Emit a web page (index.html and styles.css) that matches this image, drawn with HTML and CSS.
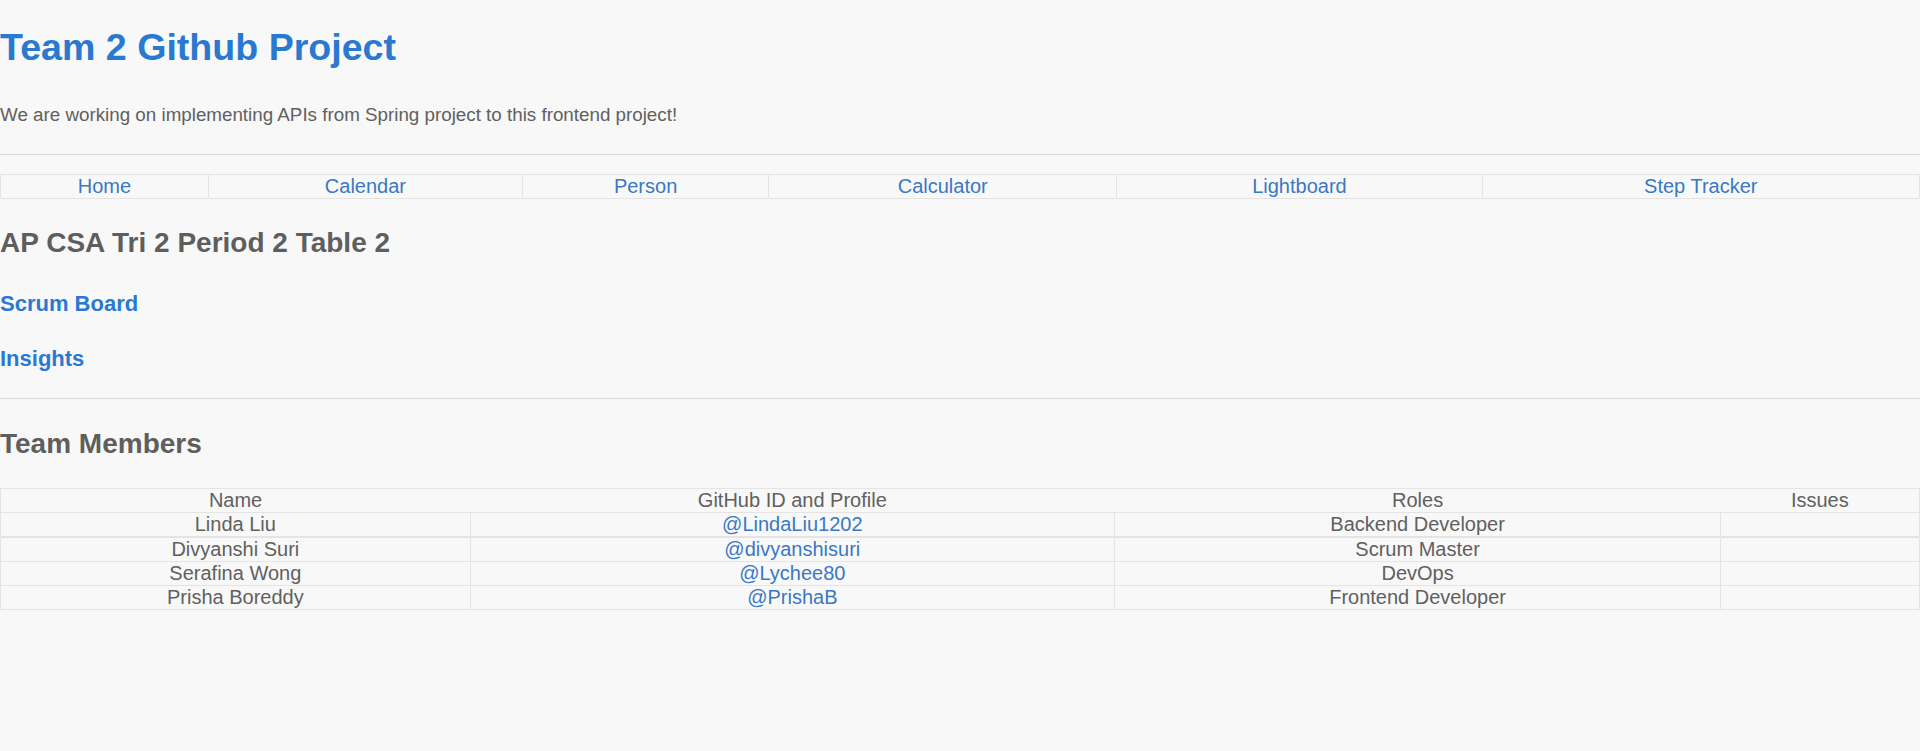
FILE: index.html
```html
<!DOCTYPE html>
<html lang="en">
<head>
<meta charset="utf-8">
<title>Team 2 Github Project</title>
<link rel="stylesheet" href="styles.css">
</head>
<body>
<h1 class="title">Team 2 Github Project</h1>
<p class="intro">We are working on implementing APIs from Spring project to this frontend project!</p>
<hr class="rule rule-top">
<table class="nav">
  <tr>
    <td><a href="#">Home</a></td>
    <td><a href="#">Calendar</a></td>
    <td><a href="#">Person</a></td>
    <td><a href="#">Calculator</a></td>
    <td><a href="#">Lightboard</a></td>
    <td><a href="#">Step Tracker</a></td>
  </tr>
</table>
<h2 class="section">AP CSA Tri 2 Period 2 Table 2</h2>
<h3 class="sub sub-first"><a href="#">Scrum Board</a></h3>
<h3 class="sub sub-second"><a href="#">Insights</a></h3>
<hr class="rule rule-mid">
<h2 class="section section-team">Team Members</h2>
<table class="team">
  <thead>
    <tr><th>Name</th><th>GitHub ID and Profile</th><th>Roles</th><th>Issues</th></tr>
  </thead>
  <tbody>
    <tr><td>Linda Liu</td><td><a href="#">@LindaLiu1202</a></td><td>Backend Developer</td><td></td></tr>
    <tr class="row-sep"><td>Divyanshi Suri</td><td><a href="#">@divyanshisuri</a></td><td>Scrum Master</td><td></td></tr>
    <tr><td>Serafina Wong</td><td><a href="#">@Lychee80</a></td><td>DevOps</td><td></td></tr>
    <tr><td>Prisha Boreddy</td><td><a href="#">@PrishaB</a></td><td>Frontend Developer</td><td></td></tr>
  </tbody>
</table>
</body>
</html>
```
FILE: styles.css
```css
html, body {
  background: #f8f8f8;
}
body {
  margin: 0;
  font-family: "Liberation Sans", Arial, Helvetica, sans-serif;
  color: #606060;
}
a {
  color: #3a78c3;
  text-decoration: none;
}
.title {
  font-size: 37.6px;
  font-weight: bold;
  color: #2a79d0;
  margin: 26px 0 0;
}
.intro {
  font-size: 18.8px;
  margin: 35px 0 0;
}
.rule {
  border: 0;
  border-top: 1px solid #d9d9d9;
  height: 0;
}
.rule-top {
  margin: 28px 0 0;
}
.nav {
  width: 100%;
  margin-top: 19px;
  border-collapse: collapse;
  font-size: 20px;
}
.nav td {
  border: 1px solid #e4e4e4;
  padding: 0;
  text-align: center;
}
.section {
  font-size: 28px;
  font-weight: bold;
  color: #5e5e5e;
  margin: 28px 0 0;
}
.sub {
  font-size: 22px;
  font-weight: bold;
  margin: 0;
}
.sub a {
  color: #2a79d0;
}
.sub-first {
  margin-top: 32px;
}
.sub-second {
  margin-top: 29px;
}
.rule-mid {
  margin: 26px 0 0;
}
.section-team {
  margin-top: 29px;
}
.team {
  width: 100%;
  margin-top: 28px;
  border-collapse: collapse;
  border: 1px solid #e4e4e4;
  font-size: 20px;
}
.team th {
  font-weight: normal;
  padding: 0;
  border: 0;
  text-align: center;
}
.team td {
  border: 1px solid #e4e4e4;
  padding: 0;
  text-align: center;
}
.team .row-sep td {
  border-top: 2px solid #e4e4e4;
}
```
